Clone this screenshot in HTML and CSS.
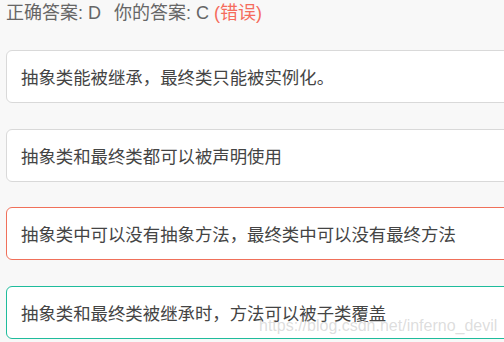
FILE: index.html
```html
<!DOCTYPE html>
<html lang="zh">
<head>
    <meta charset="UTF-8">
    <title>答题结果</title>
    <link rel="stylesheet" href="styles.css">
</head>
<body>
    <div class="result">
        <div class="answer-line">
            <span class="right-answer">正确答案: D</span>
            <span>你的答案: C <span class="wrong">(错误)</span></span>
        </div>
        <div class="options">
            <div class="option">抽象类能被继承，最终类只能被实例化。</div>
            <div class="option">抽象类和最终类都可以被声明使用</div>
            <div class="option chosen-wrong">抽象类中可以没有抽象方法，最终类中可以没有最终方法</div>
            <div class="option correct">抽象类和最终类被继承时，方法可以被子类覆盖</div>
        </div>
    </div>
    <div class="watermark">https://blog.csdn.net/inferno_devil</div>
</body>
</html>
```

FILE: styles.css
```css
body {
    margin: 0;
    background: #f8f8f8;
    font-family: "Liberation Sans", "Noto Sans CJK SC", sans-serif;
    overflow: hidden;
    height: 342px;
    position: relative;
}

.result {
    width: 504px;
    overflow: hidden;
    padding-left: 6px;
    box-sizing: border-box;
}

.answer-line {
    font-size: 18px;
    line-height: 26px;
    color: #666;
    white-space: nowrap;
}

.right-answer {
    margin-right: 8px;
}

.wrong {
    color: #f56c5c;
}

.options {
    margin-top: 24px;
    display: flex;
    flex-direction: column;
    gap: 25.5px;
}

.option {
    width: 520px;
    flex-shrink: 0;
    height: 51px;
    border: 1px solid #d9d9d9;
    border-radius: 6px;
    background: #fff;
    display: flex;
    align-items: center;
    padding-left: 14px;
    font-size: 17.4px;
    color: #444;
    white-space: nowrap;
}

.chosen-wrong {
    border-color: #f0705a;
}

.correct {
    border-color: #1fbc9c;
}

.watermark {
    position: absolute;
    left: 259px;
    top: 319px;
    font-size: 16px;
    line-height: 14px;
    color: rgba(180, 180, 180, 0.45);
    font-family: "Liberation Sans", sans-serif;
    white-space: nowrap;
}
```
